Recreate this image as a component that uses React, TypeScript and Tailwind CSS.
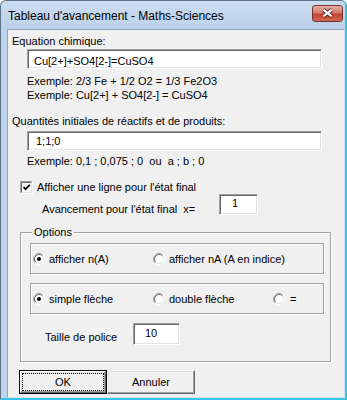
import type { ReactNode } from "react";

const TextBox = ({ className, children }: { className: string; children: ReactNode }) => (
  <div
    className={
      "bg-white border border-t-[#a0a0a0] border-l-[#a0a0a0] border-r-white border-b-white shadow-[inset_1px_1px_0_#696969,inset_-1px_-1px_0_#e3e3e3] leading-[14px] " +
      className
    }
  >
    {children}
  </div>
);

const Radio = ({ checked }: { checked?: boolean }) => (
  <svg width="12" height="12" viewBox="0 0 12 12" className="shrink-0">
    <circle cx="6" cy="6" r="4.5" fill="#fff" />
    <path d="M2.11 9.89 A5.5 5.5 0 0 1 9.89 2.11" fill="none" stroke="#a0a0a0" />
    <path d="M9.89 2.11 A5.5 5.5 0 0 1 2.11 9.89" fill="none" stroke="#fff" />
    <path d="M2.82 9.18 A4.5 4.5 0 0 1 9.18 2.82" fill="none" stroke="#696969" />
    <path d="M9.18 2.82 A4.5 4.5 0 0 1 2.82 9.18" fill="none" stroke="#e3e3e3" />
    {checked && <circle cx="6" cy="6" r="2" fill="#000" />}
  </svg>
);

const Check = () => (
  <svg width="13" height="13" viewBox="0 0 13 13" className="shrink-0">
    <rect x="0" y="0" width="13" height="13" fill="#fff" />
    <path d="M0.5 12.5 V0.5 H12.5" fill="none" stroke="#a0a0a0" />
    <path d="M1.5 11.5 V1.5 H11.5" fill="none" stroke="#696969" />
    <path d="M0.5 12.5 H12.5 V0.5" fill="none" stroke="#fff" />
    <path d="M1.5 11.5 H11.5 V1.5" fill="none" stroke="#e3e3e3" />
    <path d="M3.5 6 L5.5 8.2 L9.8 3.8" fill="none" stroke="#000" strokeWidth="1.8" />
  </svg>
);

const etched = "border border-[#a0a0a0] shadow-[inset_1px_1px_0_#fff,1px_1px_0_#fff]";

export default function App() {
  return (
    <div className="w-[347px] h-[400px] flex flex-col bg-[#bfd4ec] border-l border-t border-l-[#5f7186] border-t-[#5f7186] border-r-2 border-b-2 border-r-[#35c3e6] border-b-[#35c3e6] rounded-tl-[6px] rounded-tr-[6px] overflow-hidden font-['Liberation_Sans',Arial,sans-serif] text-black">
      {/* title bar */}
      <div className="h-[28px] flex items-center justify-between pl-[7px] bg-[linear-gradient(to_bottom,#cadcf0,#bcd2ea)]">
        <span className="text-[12px] leading-[14px] pt-[1px]">Tableau d'avancement - Maths-Sciences</span>
        <div className="mr-[2px] mb-[4px] w-[31px] h-[17px] rounded-[3px] border border-[#7a3030] bg-[linear-gradient(to_bottom,#e7aca1,#d57a6b_45%,#c2432f_55%,#d06a52)] flex items-center justify-center">
          <svg width="13" height="10" viewBox="0 0 13 10">
            <path d="M2.5 1.8 L10.5 8.2 M10.5 1.8 L2.5 8.2" stroke="#4a1b16" strokeWidth="4" />
            <path d="M2.5 1.8 L10.5 8.2 M10.5 1.8 L2.5 8.2" stroke="#fff" strokeWidth="2.2" />
          </svg>
        </div>
      </div>

      {/* client area */}
      <div className="flex-1 ml-[6px] flex flex-col bg-[#f0f0f0] border border-t-[#8da3bb] border-l-[#8da3bb] border-r-[#d6e4f2] border-b-[#d6e4f2] text-[11px]">
        <div className="mt-[4px] ml-[4px] h-[14px] leading-[14px]">Equation chimique:</div>
        <TextBox className="mt-[1px] ml-[19px] w-[295px] h-[20px] pl-[6px] pt-[4px]">Cu[2+]+SO4[2-]=CuSO4</TextBox>
        <div className="mt-[5px] ml-[19px] h-[14px] leading-[14px]">Exemple: 2/3 Fe + 1/2 O2 = 1/3 Fe2O3</div>
        <div className="ml-[19px] h-[14px] leading-[14px]">Exemple: Cu[2+] + SO4[2-] = CuSO4</div>

        <div className="mt-[12px] ml-[4px] h-[14px] leading-[14px]">Quantités initiales de réactifs et de produits:</div>
        <TextBox className="mt-[3px] ml-[19px] w-[295px] h-[20px] pl-[8px] pt-[2px]">1;1;0</TextBox>
        <div className="mt-[3px] ml-[19px] h-[14px] leading-[14px] whitespace-pre">Exemple: 0,1 ; 0,075 ; 0  ou  a ; b ; 0</div>

        <div className="mt-[13px] ml-[12px] h-[13px] flex items-center gap-[4px]">
          <Check />
          <span className="leading-[13px]">Afficher une ligne pour l'état final</span>
        </div>
        <div className="flex items-start">
          <span className="ml-[34px] mt-[8px] w-[177px] leading-[14px] whitespace-pre">Avancement pour l'état final  x=</span>
          <TextBox className="w-[39px] h-[21px] pl-[12px] pt-[1px]">1</TextBox>
        </div>

        {/* Options group */}
        <div className={"relative mt-[16px] ml-[12px] w-[311px] h-[130px] flex flex-col " + etched}>
          <span className="absolute top-[-8px] left-[11px] px-[2px] bg-[#f0f0f0] leading-[14px]">Options</span>

          <div className={"mt-[10px] ml-[9px] w-[294px] h-[31px] flex items-center pl-[2px] " + etched}>
            <div className="w-[120px] flex items-center gap-[4px]">
              <Radio checked />
              <span className="leading-[14px] pt-[1px]">afficher n(A)</span>
            </div>
            <div className="flex items-center gap-[4px]">
              <Radio />
              <span className="leading-[14px] pt-[1px]">afficher nA (A en indice)</span>
            </div>
          </div>

          <div className={"mt-[9px] ml-[9px] w-[294px] h-[31px] flex items-center pl-[2px] " + etched}>
            <div className="w-[120px] flex items-center gap-[4px]">
              <Radio checked />
              <span className="leading-[14px] pt-[1px]">simple flèche</span>
            </div>
            <div className="w-[120px] flex items-center gap-[4px]">
              <Radio />
              <span className="leading-[14px] pt-[1px]">double flèche</span>
            </div>
            <div className="flex items-center gap-[5px]">
              <Radio />
              <span className="leading-[14px] pt-[1px]">=</span>
            </div>
          </div>

          <div className="mt-[9px] flex items-start">
            <span className="ml-[24px] mt-[7px] w-[88px] leading-[14px]">Taille de police</span>
            <TextBox className="w-[47px] h-[22px] pl-[11px] pt-[2px]">10</TextBox>
          </div>
        </div>

        {/* buttons */}
        <div className="mt-[8px] ml-[11px] flex">
          <div className="w-[88px] h-[24px] flex border border-black">
            <div className="flex-1 flex p-[1px] border border-t-white border-l-white border-r-[#696969] border-b-[#696969] shadow-[inset_-1px_-1px_0_#a0a0a0,inset_1px_1px_0_#e3e3e3]">
              <div className="flex-1 flex items-center justify-center border border-dotted border-black leading-[14px]">OK</div>
            </div>
          </div>
          <div className="w-[88px] h-[24px] flex items-center justify-center border border-t-white border-l-white border-r-[#696969] border-b-[#696969] shadow-[inset_-1px_-1px_0_#a0a0a0,inset_1px_1px_0_#e3e3e3] leading-[14px]">
            Annuler
          </div>
        </div>
      </div>
    </div>
  );
}
